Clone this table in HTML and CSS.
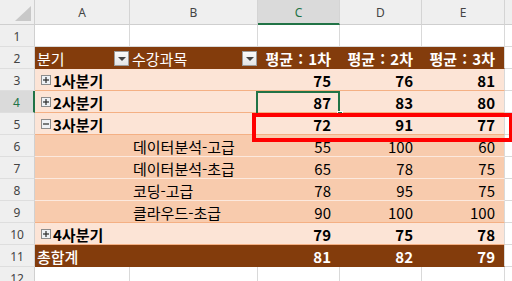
FILE: index.html
```html
<!DOCTYPE html>
<html lang="ko">
<head>
<meta charset="utf-8">
<title>피벗 테이블</title>
<link rel="stylesheet" href="styles.css">
</head>
<body>
<div class="sheet">
  <div class="corner"><span class="tri"></span></div>
  <div class="ch">A</div>
  <div class="ch">B</div>
  <div class="ch sel">C</div>
  <div class="ch">D</div>
  <div class="ch">E</div>
  <div class="ch x"></div>

  <div class="rh">1</div>
  <div class="c"></div><div class="c"></div><div class="c"></div><div class="c"></div><div class="c"></div><div class="c x"></div>

  <div class="rh">2</div>
  <div class="c p brown lbl">분기<span class="dd"></span></div>
  <div class="c p brown lbl">수강과목<span class="dd"></span></div>
  <div class="c p brown num b hd">평균 : 1차</div>
  <div class="c p brown num b hd">평균 : 2차</div>
  <div class="c p brown num b hd e">평균 : 3차</div>
  <div class="c x"></div>

  <div class="rh">3</div>
  <div class="c p sub grp"><span class="tog plus"></span>1사분기</div>
  <div class="c p sub"></div>
  <div class="c p sub num b">75</div>
  <div class="c p sub num b">76</div>
  <div class="c p sub num b e">81</div>
  <div class="c x"></div>

  <div class="rh rsel">4</div>
  <div class="c p sub grp"><span class="tog plus"></span>2사분기</div>
  <div class="c p sub"></div>
  <div class="c p sub num b">87</div>
  <div class="c p sub num b">83</div>
  <div class="c p sub num b e">80</div>
  <div class="c x"></div>

  <div class="rh">5</div>
  <div class="c p sub grp"><span class="tog minus"></span>3사분기</div>
  <div class="c p sub"></div>
  <div class="c p sub num b">72</div>
  <div class="c p sub num b">91</div>
  <div class="c p sub num b e">77</div>
  <div class="c x"></div>

  <div class="rh">6</div>
  <div class="c p det"></div>
  <div class="c p det item">데이터분석-고급</div>
  <div class="c p det num">55</div>
  <div class="c p det num">100</div>
  <div class="c p det num e">60</div>
  <div class="c x"></div>

  <div class="rh">7</div>
  <div class="c p det"></div>
  <div class="c p det item">데이터분석-초급</div>
  <div class="c p det num">65</div>
  <div class="c p det num">78</div>
  <div class="c p det num e">75</div>
  <div class="c x"></div>

  <div class="rh">8</div>
  <div class="c p det"></div>
  <div class="c p det item">코딩-고급</div>
  <div class="c p det num">78</div>
  <div class="c p det num">95</div>
  <div class="c p det num e">75</div>
  <div class="c x"></div>

  <div class="rh">9</div>
  <div class="c p det lastdet"></div>
  <div class="c p det lastdet item">클라우드-초급</div>
  <div class="c p det lastdet num">90</div>
  <div class="c p det lastdet num">100</div>
  <div class="c p det lastdet num e">100</div>
  <div class="c x"></div>

  <div class="rh">10</div>
  <div class="c p sub grp"><span class="tog plus"></span>4사분기</div>
  <div class="c p sub"></div>
  <div class="c p sub num b">79</div>
  <div class="c p sub num b">75</div>
  <div class="c p sub num b e">78</div>
  <div class="c x"></div>

  <div class="rh">11</div>
  <div class="c p brown lbl tot">총합계</div>
  <div class="c p brown"></div>
  <div class="c p brown num b">81</div>
  <div class="c p brown num b">82</div>
  <div class="c p brown num b e">79</div>
  <div class="c x"></div>

  <div class="rh">12</div>
  <div class="c"></div><div class="c"></div><div class="c"></div><div class="c"></div><div class="c"></div><div class="c x"></div>

  <div class="selbox"></div>
  <div class="handle"></div>
  <div class="redbox"></div>
</div>
</body>
</html>
```

FILE: styles.css
```css
* { box-sizing: border-box; }
html, body { margin: 0; padding: 0; background: #ffffff; }
body { width: 512px; height: 281px; overflow: hidden; }

.sheet {
  position: relative;
  display: grid;
  grid-template-columns: 35px 95px 128px 82px 82px 83px 7px;
  grid-template-rows: 25px;
  grid-auto-rows: 22px;
  font-family: "Noto Sans CJK KR", "Noto Sans", sans-serif;
  font-size: 15px;
  color: #000;
}

.corner {
  position: relative;
  background: #efefef;
  border-right: 1px solid #d0d0d0;
  border-bottom: 1px solid #cfcfcf;
}
.tri {
  position: absolute;
  right: 3px;
  bottom: 3px;
  width: 16px;
  height: 15px;
  background: #c8c8c8;
  clip-path: polygon(100% 0, 100% 100%, 0 100%);
}

.ch {
  background: #efefef;
  border-right: 1px solid #d4d4d4;
  border-bottom: 1px solid #cfcfcf;
  display: flex;
  align-items: center;
  justify-content: center;
  font-family: "Noto Sans", "Open Sans", sans-serif;
  font-size: 12px;
  color: #444;
  padding-top: 1px;
}
.ch.sel {
  background: #dadada;
  color: #217346;
  border-bottom: 2px solid #217346;
}
.ch.x { border-right: none; }

.rh {
  background: #efefef;
  border-right: 1px solid #d0d0d0;
  border-bottom: 1px solid #dedede;
  display: flex;
  align-items: center;
  justify-content: center;
  font-family: "Noto Sans", "Open Sans", sans-serif;
  font-size: 12px;
  color: #444;
  padding-top: 1px;
}
.rh.rsel {
  background: #dadada;
  color: #217346;
  border-right: 2px solid #217346;
}

.c {
  border-right: 1px solid #d9d9d9;
  border-bottom: 1px solid #d9d9d9;
  background: #ffffff;
  display: flex;
  align-items: center;
  white-space: nowrap;
  overflow: hidden;
  padding-top: 1px;
}
.c.x { border-right: none; }

.c.p { border-right: none; }
.c.p.e { border-right: 1px solid #d9d9d9; }

.brown {
  background: #833c0c;
  color: #ffffff;
  border-bottom-color: #833c0c;
}
.sub {
  background: #fce4d6;
  border-bottom-color: #f4b084;
}
.det {
  background: #f8cbad;
  border-bottom-color: #fce9de;
}
.det.lastdet { border-bottom-color: #f4b084; }

.num {
  justify-content: flex-end;
  padding-right: 9px;
}
.b { font-weight: 700; }
.hd { word-spacing: 1px; }

.lbl {
  justify-content: space-between;
  padding-left: 2px;
  padding-right: 1px;
}
.tot { font-weight: 500; }

.dd {
  position: relative;
  width: 15px;
  height: 15px;
  background: linear-gradient(#fbfbfb, #e4e4e4);
  border: 1px solid #9c9c9c;
  flex: none;
}
.dd::after {
  content: "";
  position: absolute;
  left: 3px;
  top: 5px;
  border-left: 4px solid transparent;
  border-right: 4px solid transparent;
  border-top: 4px solid #444;
}

.grp {
  padding-left: 6px;
  font-weight: 700;
}
.tog {
  position: relative;
  width: 10px;
  height: 10px;
  border: 1px solid #8c8c8c;
  background: #eef1f5;
  margin-right: 2px;
  flex: none;
}
.tog::before {
  content: "";
  position: absolute;
  left: 1px;
  top: 3px;
  width: 6px;
  height: 2px;
  background: #2b2b2b;
  transform: scaleY(0.6);
}
.tog.plus::after {
  content: "";
  position: absolute;
  left: 3px;
  top: 1px;
  width: 2px;
  height: 6px;
  background: #2b2b2b;
  transform: scaleX(0.6);
}

.item {
  padding-left: 3px;
}

.selbox {
  position: absolute;
  left: 256px;
  top: 91px;
  width: 84px;
  height: 24px;
  border: 2px solid #217346;
}
.handle {
  position: absolute;
  left: 337px;
  top: 111px;
  width: 6px;
  height: 6px;
  background: #217346;
  border: 1px solid #ffffff;
}
.redbox {
  position: absolute;
  left: 252px;
  top: 113px;
  width: 261px;
  height: 29px;
  border: 4px solid #ff0000;
}
```
